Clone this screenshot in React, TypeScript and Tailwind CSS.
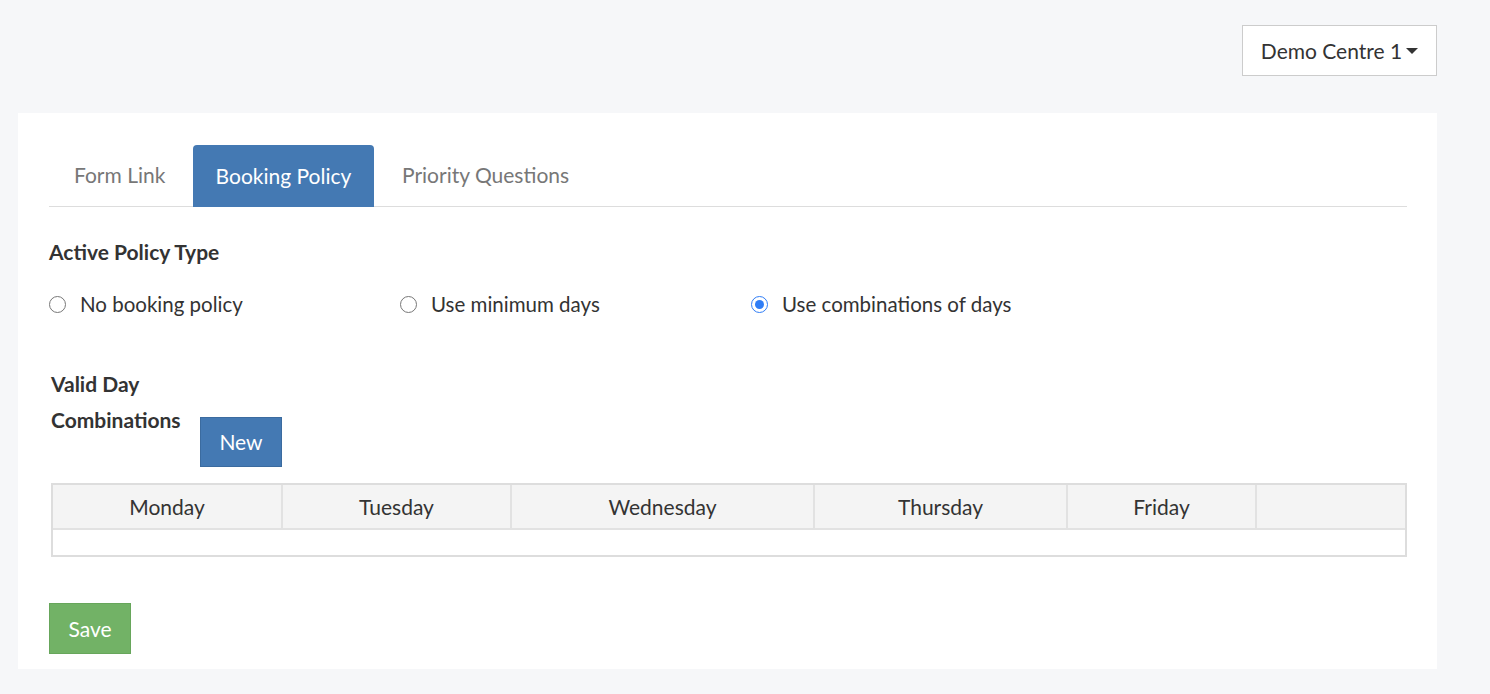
import React from "react";

const days = [
  { label: "Monday", w: "w-[230px]" },
  { label: "Tuesday", w: "w-[229px]" },
  { label: "Wednesday", w: "w-[303px]" },
  { label: "Thursday", w: "w-[253px]" },
  { label: "Friday", w: "w-[189px]" },
  { label: "", w: "" },
];

const policies = [
  { label: "No booking policy", checked: false },
  { label: "Use minimum days", checked: false },
  { label: "Use combinations of days", checked: true },
];

function Radio({ checked }: { checked: boolean }) {
  if (checked) {
    return (
      <span className="w-[17px] h-[17px] rounded-full border-[1.5px] border-[#2f7df6] bg-white flex items-center justify-center">
        <span className="w-[9px] h-[9px] rounded-full bg-[#2f7df6]" />
      </span>
    );
  }
  return <span className="w-[17px] h-[17px] rounded-full border border-[#777] bg-white" />;
}

export default function App() {
  return (
    <div className="min-h-[694px] bg-[#f6f7f9] font-['Lato',sans-serif] text-[#333] pt-[25px] pb-[26px]">
      {/* Centre picker */}
      <div className="flex justify-end pr-[53px]">
        <button className="h-[51px] w-[195px] bg-white border border-[#ccc] flex items-center justify-center gap-1 text-[21px] text-[#333]">
          Demo Centre 1
          <svg width="12" height="7" viewBox="0 0 12 7" className="mt-0.5">
            <path d="M0 0h12L6 6z" fill="#333" />
          </svg>
        </button>
      </div>

      {/* Panel */}
      <div className="mt-[37px] ml-[18px] w-[1419px] bg-white pt-[32px] pl-[31px] pr-[30px] pb-[15px]">
        {/* Tabs */}
        <div className="flex border-b border-[#ddd] h-[62px] items-end">
          <div className="w-[141px] pl-[25px] h-[62px] flex items-center text-[21px] text-[#777] mr-[3px]">Form Link</div>
          <div className="w-[181px] h-[62px] flex items-center justify-center text-[21px] text-white bg-[#4479b3] rounded-t-[4px] mb-[-1px]">
            Booking Policy
          </div>
          <div className="px-[28px] h-[62px] flex items-center text-[21px] text-[#777]">Priority Questions</div>
        </div>

        <div className="mt-[33px] text-[21px] font-bold leading-[24px]">Active Policy Type</div>

        <div className="flex mt-[28px] h-[24px] items-center">
          {policies.map(p => (
            <label key={p.label} className="w-[351px] flex items-center gap-[14px] text-[20.5px]">
              <Radio checked={p.checked} />
              {p.label}
            </label>
          ))}
        </div>

        {/* Valid day combinations */}
        <div className="flex mt-[50px] pl-[2px]">
          <div className="w-[149px] text-[21px] font-bold leading-[36px]">
            Valid Day
            <br />
            Combinations
          </div>
          <button className="mt-[51px] h-[50px] w-[82px] bg-[#4479b3] border border-[#3b6b9f] text-white text-[21px]">
            New
          </button>
        </div>

        <div className="mt-[16px] ml-[2px] w-[1356px] border-2 border-[#ddd]">
          <div className="flex h-[45px] bg-[#f4f4f4] border-b-2 border-[#e2e2e2]">
            {days.map((d, i) => (
              <div
                key={i}
                className={`${d.w || "flex-1"} flex items-center justify-center text-[21px] ${i < days.length - 1 ? "border-r-2 border-[#e2e2e2]" : ""}`}
              >
                {d.label}
              </div>
            ))}
          </div>
          <div className="h-[25px] bg-white" />
        </div>

        <button className="mt-[46px] h-[51px] w-[82px] bg-[#72b266] border border-[#67a65b] text-white text-[21px]">
          Save
        </button>
      </div>
    </div>
  );
}
